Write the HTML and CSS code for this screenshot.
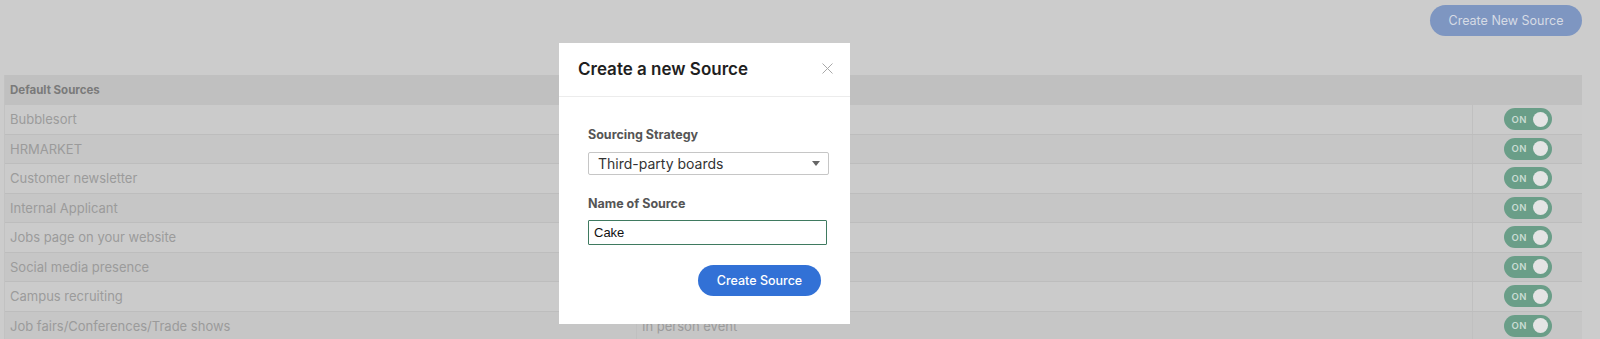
FILE: index.html
```html
<!DOCTYPE html>
<html>
<head>
<meta charset="utf-8">
<link rel="stylesheet" href="styles.css">
</head>
<body>
<div class="page">
  <div class="topbar">
    <button class="btn-new">Create New Source</button>
  </div>
  <div class="table">
    <div class="row head"><div class="cell c1">Default Sources</div><div class="cell c2"></div><div class="cell c3"></div></div>
    <div class="row light"><div class="cell c1">Bubblesort</div><div class="cell c2"></div><div class="cell c3"><span class="toggle"><span class="on">ON</span><span class="knob"></span></span></div></div>
    <div class="row dark"><div class="cell c1">HRMARKET</div><div class="cell c2"></div><div class="cell c3"><span class="toggle"><span class="on">ON</span><span class="knob"></span></span></div></div>
    <div class="row light"><div class="cell c1">Customer newsletter</div><div class="cell c2"></div><div class="cell c3"><span class="toggle"><span class="on">ON</span><span class="knob"></span></span></div></div>
    <div class="row dark"><div class="cell c1">Internal Applicant</div><div class="cell c2"></div><div class="cell c3"><span class="toggle"><span class="on">ON</span><span class="knob"></span></span></div></div>
    <div class="row light"><div class="cell c1">Jobs page on your website</div><div class="cell c2"></div><div class="cell c3"><span class="toggle"><span class="on">ON</span><span class="knob"></span></span></div></div>
    <div class="row dark"><div class="cell c1">Social media presence</div><div class="cell c2"></div><div class="cell c3"><span class="toggle"><span class="on">ON</span><span class="knob"></span></span></div></div>
    <div class="row light"><div class="cell c1">Campus recruiting</div><div class="cell c2"></div><div class="cell c3"><span class="toggle"><span class="on">ON</span><span class="knob"></span></span></div></div>
    <div class="row dark"><div class="cell c1">Job fairs/Conferences/Trade shows</div><div class="cell c2">In person event</div><div class="cell c3"><span class="toggle"><span class="on">ON</span><span class="knob"></span></span></div></div>
  </div>
</div>

<div class="modal">
  <div class="modal-head">
    <h2 class="modal-title">Create a new Source</h2>
    <svg class="close" width="11" height="11" viewBox="0 0 11 11"><path d="M0.5 0.5 L10.5 10.5 M10.5 0.5 L0.5 10.5" stroke="#a8a8a8" stroke-width="1" fill="none"/></svg>
  </div>
  <div class="modal-body">
    <div class="label">Sourcing Strategy</div>
    <div class="select"><span>Third-party boards</span><svg class="arrow" width="8" height="5" viewBox="0 0 8 5"><path d="M0 0 H8 L4 5 Z" fill="#666"/></svg></div>
    <div class="label label2">Name of Source</div>
    <div class="input">Cake</div>
    <div class="actions"><button class="btn-create">Create Source</button></div>
  </div>
</div>
</body>
</html>
```
FILE: styles.css
```css
* { box-sizing: border-box; }
html, body { margin: 0; padding: 0; }
body {
  width: 1600px;
  height: 339px;
  overflow: hidden;
  background: #cccccc;
  font-family: "Inter", "Liberation Sans", sans-serif;
  position: relative;
}
.topbar {
  display: flex;
  justify-content: flex-end;
  padding: 5px 18px 0 0;
}
.btn-new {
  width: 152px;
  height: 31px;
  border: none;
  border-radius: 16px;
  background: #7e96c1;
  color: #d6dbe5;
  font-family: "Inter", "Liberation Sans", sans-serif;
  font-size: 12.5px;
  font-weight: 400;
  padding: 0;
}
.table {
  margin: 39px 0 0 4px;
  width: 1578px;
  border-left: 1px solid #c2c2c2;
}
.row {
  display: grid;
  grid-template-columns: 631px 836px 110px;
  height: 29.5px;
  border-bottom: 1px solid #bdbdbd;
}
.row.head {
  height: 30px;
  background: #c0c0c0;
  border-bottom: none;
}
.row.light { background: #cbcbcb; }
.row.dark { background: #c6c6c6; }
.cell {
  display: flex;
  align-items: center;
  font-size: 13px;
  color: #9b9b9b;
  padding-left: 5px;
}
.row .c2, .row .c3 { border-left: 1px solid #c0c0c0; }
.row.head .c2, .row.head .c3 { border-left: none; }
.row.head .c1 {
  font-size: 11.5px;
  font-weight: 700;
  color: #7a7a7a;
}
.c3 { justify-content: center; padding-left: 0; }
.toggle {
  width: 48px;
  height: 22px;
  border-radius: 11px;
  background: #6a9e88;
  display: flex;
  align-items: center;
  justify-content: space-between;
  padding: 0 4px 0 8px;
}
.on {
  font-size: 9.5px;
  font-weight: 600;
  letter-spacing: 0.5px;
  color: #c9dcd3;
}
.knob {
  width: 15px;
  height: 15px;
  border-radius: 50%;
  background: #e4e4e4;
}
.modal {
  position: absolute;
  left: 559px;
  top: 43px;
  width: 291px;
  height: 281px;
  background: #ffffff;
}
.modal-head {
  height: 54px;
  border-bottom: 1px solid #ececec;
  display: flex;
  align-items: center;
  justify-content: space-between;
  padding: 0 17px 2px 19px;
}
.modal-title {
  margin: 0;
  font-size: 17px;
  font-weight: 600;
  color: #1f1f1f;
}
.close { display: block; }
.modal-body {
  padding: 30px 21px 0 29px;
}
.label {
  font-size: 12.5px;
  font-weight: 700;
  color: #555555;
  line-height: 16px;
}
.select {
  margin-top: 9px;
  height: 23px;
  border: 1px solid #c6c6c6;
  border-radius: 2px;
  display: flex;
  align-items: center;
  justify-content: space-between;
  padding: 0 8px 0 9px;
  font-size: 14px;
  color: #333333;
}
.arrow { display: block; }
.label2 { margin-top: 21px; }
.input {
  margin-top: 8px;
  width: 239px;
  height: 25px;
  border: 1px solid #3f7a60;
  border-radius: 1px;
  display: flex;
  align-items: center;
  padding-left: 5px;
  font-family: "Liberation Sans", Arial, sans-serif;
  font-size: 13px;
  color: #111111;
}
.actions {
  display: flex;
  justify-content: flex-end;
  margin-top: 20px;
  padding-right: 8px;
}
.btn-create {
  width: 123px;
  height: 31px;
  border: none;
  border-radius: 16px;
  background: #3271d6;
  color: #ffffff;
  font-family: "Inter", "Liberation Sans", sans-serif;
  font-size: 12.5px;
  font-weight: 500;
  padding: 0;
}
```
